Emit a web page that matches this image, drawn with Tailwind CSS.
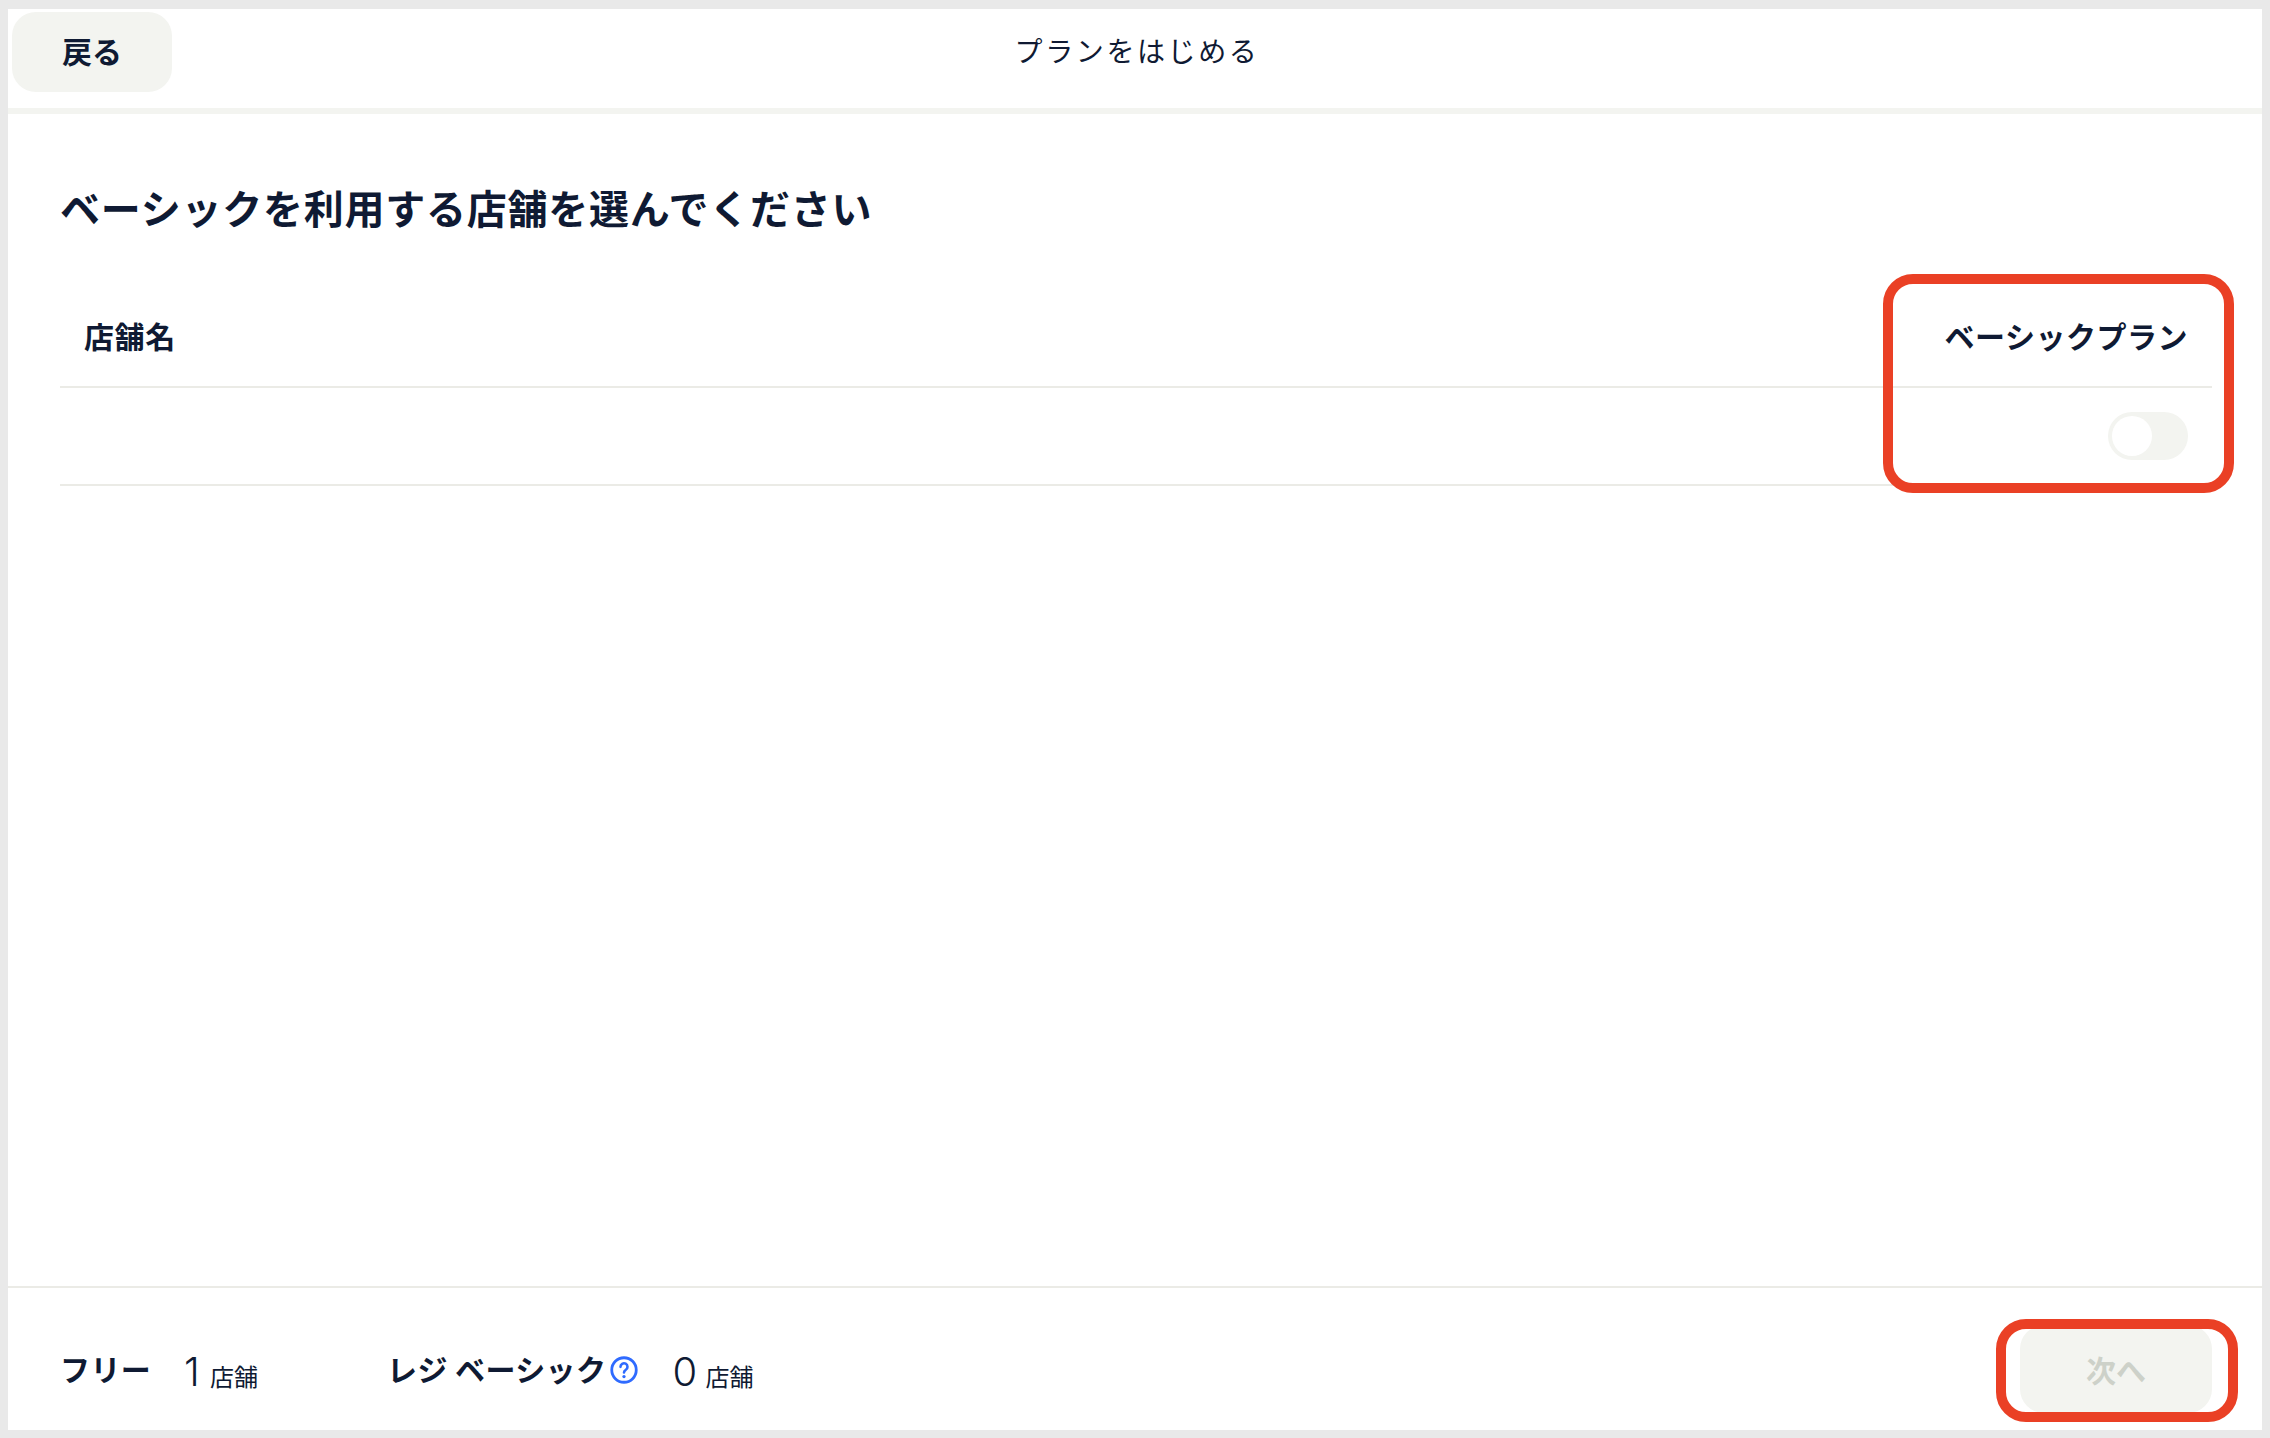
<!DOCTYPE html>
<html lang="ja">
<head>
  <meta charset="UTF-8">
  <title>プランをはじめる</title>
  <script src="https://cdn.jsdelivr.net/npm/@tailwindcss/browser@4"></script>
</head>
<body class="bg-[#e9e9e9] h-[1438px] w-[2270px] overflow-hidden font-['Noto_Sans_CJK_JP','Noto_Sans',sans-serif] text-[#0f1a33]">
  <div class="relative h-full pt-[9px] pb-2 pl-2 pr-2">
    <div class="bg-white h-full flex flex-col">

      <!-- header -->
      <header class="relative h-[105px] shrink-0 border-b-[6px] border-[#f3f4f0] flex items-center justify-center">
        <button class="absolute left-1 top-[3px] w-40 h-20 pb-1 rounded-3xl bg-[#f3f4f0] text-[30px] font-bold">戻る</button>
        <h1 class="text-[28px] tracking-[2.6px] -mt-[17px] ml-1">プランをはじめる</h1>
      </header>

      <!-- main -->
      <main class="flex-1 pl-[52px] pr-[50px] pt-[65px]">
        <h2 class="text-[40px] leading-[56px] font-bold tracking-[0.75px]">ベーシックを利用する店舗を選んでください</h2>
        <div class="mt-[50px] h-[103px] flex items-center justify-between px-6 border-b-2 border-[#ebebe6] text-[30px] font-bold">
          <span class="tracking-[0.6px]">店舗名</span>
          <span class="tracking-[0.5px]">ベーシックプラン</span>
        </div>
        <div class="h-[98px] flex items-center justify-end pr-6 border-b-2 border-[#ebebe6]">
          <div class="w-20 h-12 rounded-full bg-[#f3f4f0] p-1">
            <div class="w-10 h-10 rounded-full bg-white"></div>
          </div>
        </div>
      </main>

      <!-- footer -->
      <footer class="h-[144px] shrink-0 border-t-2 border-[#ebebe6] flex items-center justify-between pl-[52px] pr-[50px]">
        <div class="flex items-baseline mt-[26px]">
          <span class="text-[30px] font-bold tracking-[0.4px] w-[124px] -translate-y-[5px]">フリー</span>
          <span class="text-[40px] font-light font-['Inter'] w-[26px]">1</span>
          <span class="text-[24px] w-[177px]">店舗</span>
          <span class="text-[30px] font-bold tracking-[0.4px] -translate-y-[5px]">レジ ベーシック</span>
          <svg class="w-7 h-7 ml-1 self-center -translate-y-[2px]" viewBox="0 0 24 24" fill="none">
            <circle cx="12" cy="12" r="10.5" stroke="#2f6bff" stroke-width="2.4"/>
            <path d="M9 9.3a3 3 0 1 1 4.6 2.5c-1 .7-1.6 1.2-1.6 2.4" stroke="#2f6bff" stroke-width="2.2" stroke-linecap="round"/>
            <circle cx="12" cy="17.6" r="1.4" fill="#2f6bff"/>
          </svg>
          <span class="text-[40px] font-light font-['Inter'] ml-[34px] w-[33px]">0</span>
          <span class="text-[24px]">店舗</span>
        </div>
        <button class="w-48 h-[88px] mt-[20px] rounded-3xl bg-[#f3f4f0] text-[#cdd1c9] text-[30px] font-bold">次へ</button>
      </footer>
    </div>

    <!-- annotation boxes -->
    <div class="absolute left-[1883px] top-[274px] w-[351px] h-[219px] border-[10px] border-[#ea4025] rounded-[30px]"></div>
    <div class="absolute left-[1996px] top-[1319px] w-[242px] h-[103px] border-[10px] border-[#ea4025] rounded-[30px]"></div>
  </div>
</body>
</html>
